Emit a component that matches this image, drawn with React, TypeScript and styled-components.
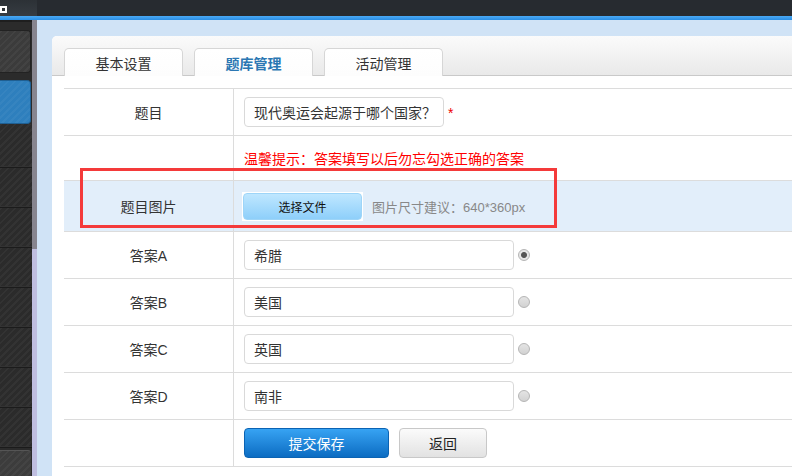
import React from "react";
import styled, { createGlobalStyle, css } from "styled-components";

const Global = createGlobalStyle`
  html, body { margin: 0; padding: 0; }
  body {
    font-family: "Liberation Sans", "Noto Sans CJK SC", sans-serif;
    background: #d0e3f6;
    overflow: hidden;
  }
  * { box-sizing: border-box; }
`;

const Page = styled.div`
  width: 792px;
  height: 476px;
  display: flex;
  flex-direction: column;
  overflow: hidden;
`;

const TopBar = styled.div`
  height: 16px;
  background: #272b30;
  display: flex;
`;

const LogoArea = styled.div`
  width: 37px;
  height: 16px;
  background: linear-gradient(#2c3136, #363c42);
`;

const BlueStripe = styled.div`
  height: 4px;
  background: linear-gradient(#4aa9f4, #2b8fe4);
`;

const Body = styled.div`
  flex: 1;
  display: flex;
  min-height: 0;
`;

const Sidebar = styled.div`
  width: 32px;
  background: #2b2b2b;
  border-top: 2px solid #1e1e1e;
  display: flex;
  flex-direction: column;
  padding-top: 8px;
`;

const stripes = css`
  background-image: repeating-linear-gradient(
    135deg,
    rgba(255, 255, 255, 0.04) 0 2px,
    rgba(0, 0, 0, 0) 2px 5px
  );
`;

const SideButton = styled.div<{ $active?: boolean }>`
  height: ${(p) => (p.$active ? 44 : 43)}px;
  margin-bottom: ${(p) => (p.$active ? 0 : 7)}px;
  margin-right: 1px;
  border-radius: 0 4px 4px 0;
  background-color: ${(p) => (p.$active ? "#2e7fbd" : "#3b3b3b")};
  border: 1px solid ${(p) => (p.$active ? "#1f5f92" : "#222")};
  border-left: none;
  ${stripes}
`;

const SideRow = styled.div<{ $h: number }>`
  height: ${(p) => p.$h}px;
  border-bottom: 1px solid #1b1b1b;
  box-shadow: inset 0 -1px 0 #333;
  ${stripes}
`;

const SideFooter = styled.div`
  flex: 1;
  margin-top: 2px;
  margin-right: 1px;
  background-color: #3c3c3c;
  border-top: 1px solid #555;
  border-radius: 0 3px 0 0;
  ${stripes}
`;

const Scroll = styled.div`
  width: 5px;
  display: flex;
  flex-direction: column;
`;

const ScrollThumb = styled.div`
  height: 229px;
  background: #87858f;
`;

const ScrollTrack = styled.div`
  flex: 1;
  background: #bfbee0;
`;

const Content = styled.div`
  flex: 1;
  min-width: 0;
  background: #d0e3f6;
  padding: 16px 0 0 15px;
  display: flex;
`;

const Panel = styled.div`
  flex: 1;
  background: #fff;
  border-radius: 5px 0 0 0;
  overflow: hidden;
  display: flex;
  flex-direction: column;
`;

const TabBar = styled.div`
  height: 40px;
  flex-shrink: 0;
  background: linear-gradient(#fbfbfb, #e9e9e9);
  border-bottom: 1px solid #c9c9c9;
  display: flex;
  align-items: flex-end;
  gap: 11px;
  padding-left: 12px;
`;

const Tab = styled.div<{ $active?: boolean }>`
  width: 119px;
  height: 28px;
  margin-bottom: -1px;
  background: linear-gradient(#fff, #fdfdfd);
  border: 1px solid #d6d6d6;
  border-bottom: none;
  border-radius: 5px 5px 0 0;
  display: flex;
  align-items: center;
  justify-content: center;
  font-size: 14px;
  color: ${(p) => (p.$active ? "#2b77b3" : "#333")};
  font-weight: ${(p) => (p.$active ? "bold" : "normal")};
`;

const Table = styled.div`
  position: relative;
  margin: 12px 0 0 12px;
  border-bottom: 1px solid #dcdcdc;
`;

const Row = styled.div<{ $h: number; $tint?: boolean }>`
  height: ${(p) => p.$h}px;
  border-top: 1px solid #dcdcdc;
  display: flex;
  background: ${(p) => (p.$tint ? "#e2eefa" : "#fff")};
`;

const Label = styled.div`
  width: 170px;
  flex-shrink: 0;
  border-right: 1px solid #dcdcdc;
  display: flex;
  align-items: center;
  justify-content: center;
  font-size: 14px;
  color: #333;
`;

const Value = styled.div`
  flex: 1;
  display: flex;
  align-items: center;
  padding-left: 10px;
  white-space: nowrap;
`;

const Input = styled.div<{ $w: number }>`
  width: ${(p) => p.$w}px;
  height: 30px;
  border: 1px solid #d9d9d9;
  border-radius: 4px;
  background: #fff;
  padding: 0 8px 0 9px;
  display: flex;
  align-items: center;
  font-size: 14px;
  color: #333;
  white-space: nowrap;
  overflow: hidden;
`;

const Required = styled.span`
  color: #e00;
  font-size: 14px;
  margin-left: 4px;
  margin-top: 2px;
`;

const Hint = styled.div`
  color: #f00;
  font-size: 14px;
`;

const FileFrame = styled.div`
  background: #fff;
  padding: 1px;
  margin-left: -2px;
`;

const FileButton = styled.div`
  width: 119px;
  height: 27px;
  border-radius: 4px;
  background: linear-gradient(#bfe7ff, #8ecffa);
  border: 1px solid #9ed5f8;
  display: flex;
  align-items: center;
  justify-content: center;
  font-size: 12px;
  color: #111;
`;

const SizeHint = styled.div`
  margin-left: 9px;
  font-size: 13px;
  color: #888;
`;

const Radio = styled.div<{ $checked?: boolean }>`
  width: 12px;
  height: 12px;
  margin-left: 4px;
  border-radius: 50%;
  border: 1px solid #b5b5b5;
  background: ${(p) =>
    p.$checked ? "radial-gradient(circle, #555 0 2.5px, #e6e6e6 3.5px)" : "linear-gradient(#e4e4e4, #d2d2d2)"};
`;

const PrimaryButton = styled.div`
  width: 145px;
  height: 30px;
  border-radius: 4px;
  background: linear-gradient(#37a3f3, #0c6cc2);
  border: 1px solid #0b63b3;
  display: flex;
  align-items: center;
  justify-content: center;
  color: #fff;
  font-size: 14px;
`;

const SecondaryButton = styled.div`
  width: 88px;
  height: 30px;
  margin-left: 10px;
  border-radius: 4px;
  background: linear-gradient(#fbfbfb, #e2e2e2);
  border: 1px solid #c8c8c8;
  display: flex;
  align-items: center;
  justify-content: center;
  color: #222;
  font-size: 14px;
`;

const Annotation = styled.div`
  position: absolute;
  left: 16px;
  top: 80px;
  width: 477px;
  height: 60px;
  border: 3px solid #f43a3a;
  pointer-events: none;
`;

const answers = [
  { key: "A", text: "希腊", checked: true },
  { key: "B", text: "美国", checked: false },
  { key: "C", text: "英国", checked: false },
  { key: "D", text: "南非", checked: false },
];

export default function App() {
  return (
    <Page>
      <Global />
      <TopBar>
        <LogoArea>
          <svg width="8" height="9" viewBox="0 0 8 9">
            <path d="M0 1h7v7H0z" fill="#fff" />
            <path d="M2 3h3v3H2z" fill="#2e3338" />
          </svg>
        </LogoArea>
      </TopBar>
      <BlueStripe />
      <Body>
        <Sidebar>
          <SideButton />
          <SideButton $active />
          <SideRow $h={44} />
          <SideRow $h={40} />
          <SideRow $h={40} />
          <SideRow $h={40} />
          <SideRow $h={40} />
          <SideRow $h={40} />
          <SideRow $h={40} />
          <SideRow $h={40} />
          <SideFooter />
        </Sidebar>
        <Scroll>
          <ScrollThumb />
          <ScrollTrack />
        </Scroll>
        <Content>
          <Panel>
            <TabBar>
              <Tab>基本设置</Tab>
              <Tab $active>题库管理</Tab>
              <Tab>活动管理</Tab>
            </TabBar>
            <Table>
              <Row $h={47}>
                <Label>题目</Label>
                <Value>
                  <Input $w={200}>现代奥运会起源于哪个国家？</Input>
                  <Required>*</Required>
                </Value>
              </Row>
              <Row $h={45}>
                <Label />
                <Value>
                  <Hint>温馨提示：答案填写以后勿忘勾选正确的答案</Hint>
                </Value>
              </Row>
              <Row $h={51} $tint>
                <Label>题目图片</Label>
                <Value>
                  <FileFrame>
                    <FileButton>选择文件</FileButton>
                  </FileFrame>
                  <SizeHint>图片尺寸建议：640*360px</SizeHint>
                </Value>
              </Row>
              {answers.map((a) => (
                <Row $h={47} key={a.key}>
                  <Label>答案{a.key}</Label>
                  <Value>
                    <Input $w={270}>{a.text}</Input>
                    <Radio $checked={a.checked} />
                  </Value>
                </Row>
              ))}
              <Row $h={47}>
                <Label />
                <Value>
                  <PrimaryButton>提交保存</PrimaryButton>
                  <SecondaryButton>返回</SecondaryButton>
                </Value>
              </Row>
              <Annotation />
            </Table>
          </Panel>
        </Content>
      </Body>
    </Page>
  );
}
